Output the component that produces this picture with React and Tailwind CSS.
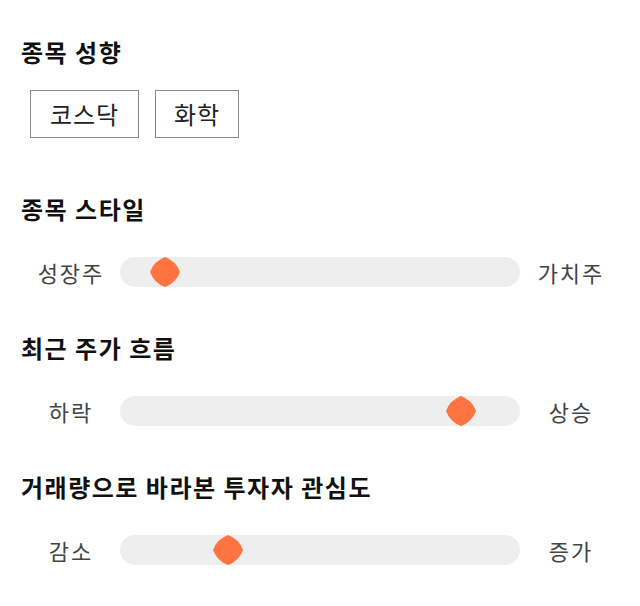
import React from 'react';

const font = { fontFamily: '"Noto Sans CJK KR", "Noto Sans", sans-serif' };

const sliders = [
  { title: '종목 스타일', left: '성장주', right: '가치주', value: 8 },
  { title: '최근 주가 흐름', left: '하락', right: '상승', value: 88 },
  { title: '거래량으로 바라본 투자자 관심도', left: '감소', right: '증가', value: 25 },
];

const Thumb = () => (
  <svg width="30" height="30" viewBox="0 0 30 30">
    <path d="M15 0 Q26 4 30 15 Q26 26 15 30 Q4 26 0 15 Q4 4 15 0Z" fill="#ff7441" />
  </svg>
);

const Slider = ({ left, right, value }) => (
  <div className="flex items-center h-[30px] mt-8">
    <span className="w-[100px] text-center text-[22px] tracking-[2px] pl-[2px] text-[#444]">{left}</span>
    <div className="relative flex-1 h-[30px] rounded-full bg-[#eeeeee]">
      <div className="absolute top-0" style={{ left: `${(value / 100) * 370}px` }}>
        <Thumb />
      </div>
    </div>
    <span className="w-[100px] text-center text-[22px] tracking-[2px] pl-[2px] text-[#444]">{right}</span>
  </div>
);

export default function App() {
  return (
    <div className="w-[640px] h-[606px] bg-white px-5 pt-[36px]" style={font}>
      <section>
        <h2 className="text-[24px] font-bold leading-[32px] tracking-[1.5px] text-[#111] pl-[1px]">종목 성향</h2>
        <div className="flex gap-4 mt-[22px] pl-[10px]">
          <div className="w-[109px] h-[48px] flex items-center justify-center border border-[#8a8a8a] text-[24px] tracking-[1px] text-[#222]">
            코스닥
          </div>
          <div className="w-[84px] h-[48px] flex items-center justify-center border border-[#8a8a8a] text-[24px] tracking-[1px] text-[#222]">
            화학
          </div>
        </div>
      </section>

      {sliders.map((s, i) => (
        <section key={s.title} className={i === 0 ? 'mt-[55px]' : 'mt-[45px]'}>
          <h2 className="text-[24px] font-bold leading-[32px] tracking-[1.5px] text-[#111] pl-[1px]">{s.title}</h2>
          <Slider left={s.left} right={s.right} value={s.value} />
        </section>
      ))}
    </div>
  );
}
